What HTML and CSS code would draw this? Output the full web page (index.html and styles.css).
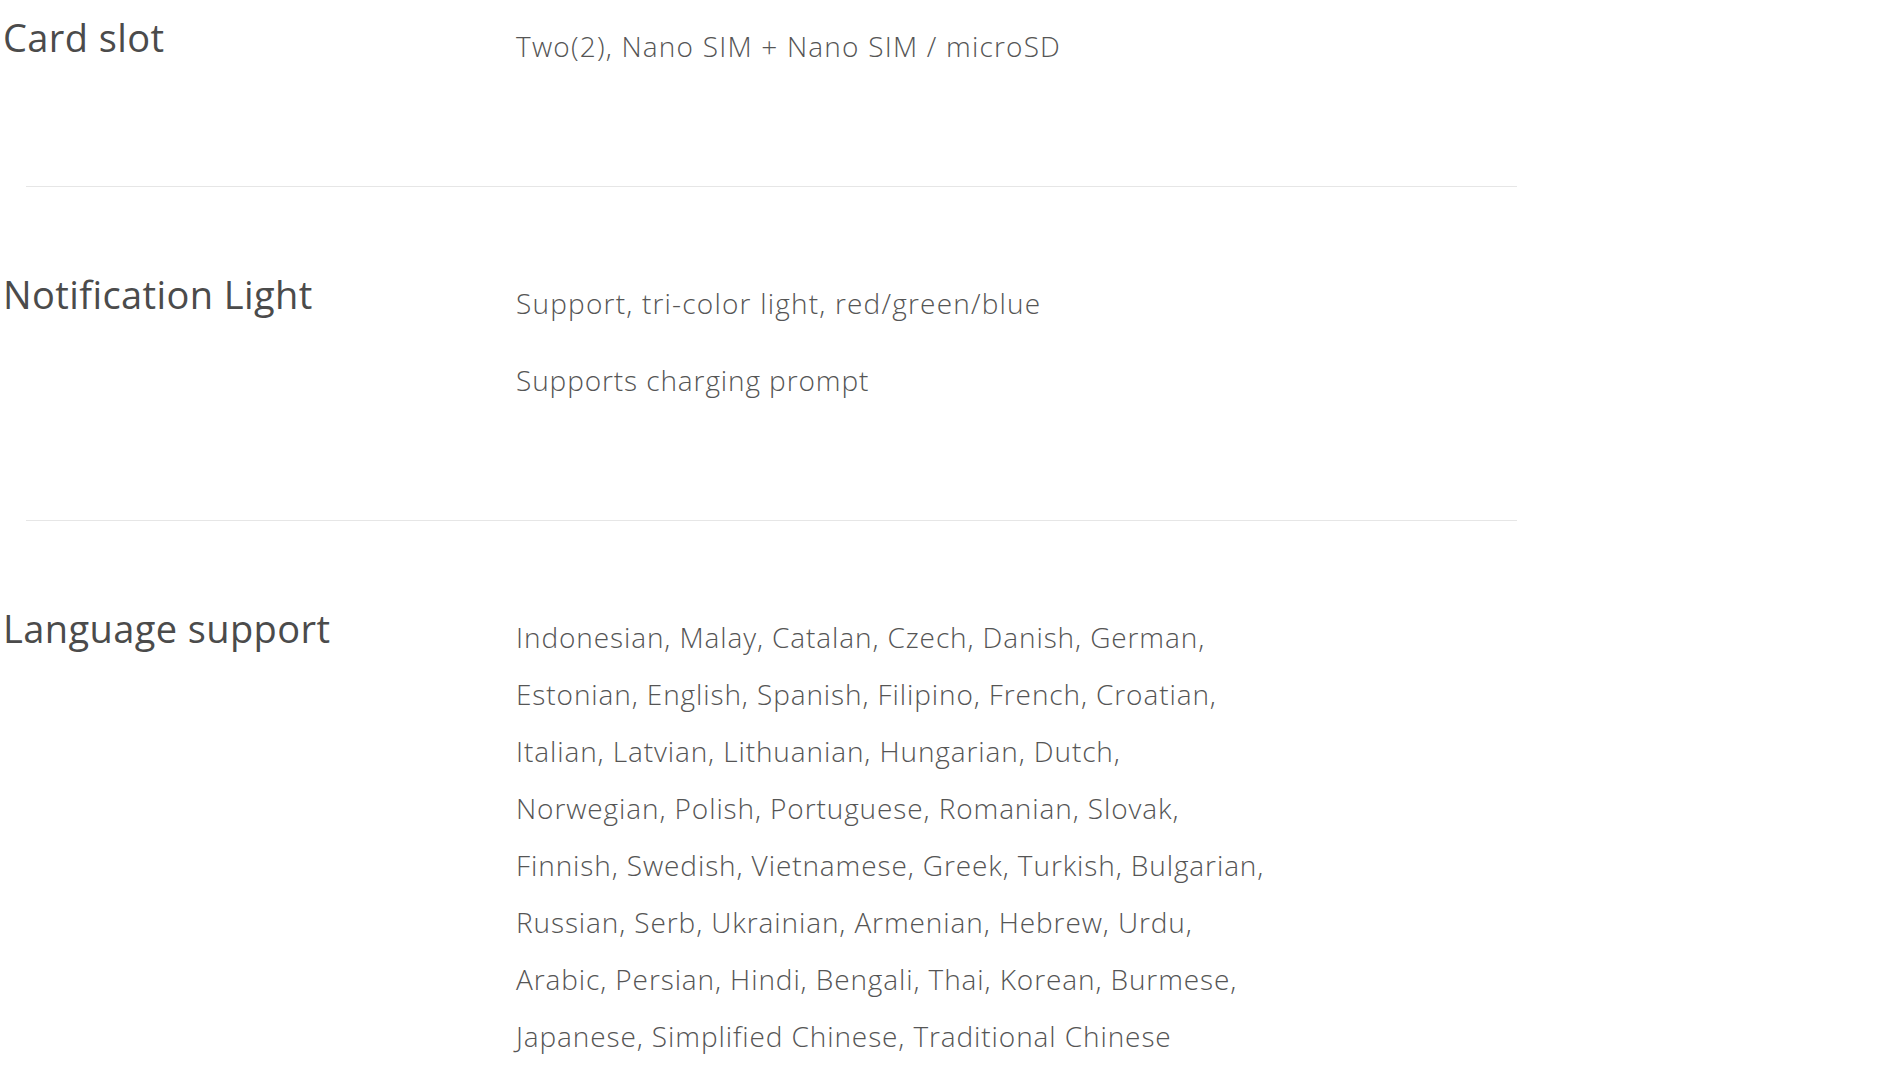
FILE: index.html
```html
<!DOCTYPE html>
<html lang="en">
  <head>
    <meta charset="UTF-8" />
    <meta name="viewport" content="width=device-width, initial-scale=1.0" />
    <title>Specifications</title>
    <link rel="stylesheet" href="styles.css">
  </head>
  <body>
    <div class="specs">
      <div class="spec">
        <h2 class="spec-name">Card slot</h2>
        <div class="spec-value">
          <p class="big">Two(2), Nano SIM + Nano SIM / microSD</p>
        </div>
      </div>
      <div class="line"></div>

      <div class="spec">
        <h2 class="spec-name">Notification Light</h2>
        <div class="spec-value">
          <p class="big">Support, tri-color light, red/green/blue</p>
          <p>Supports charging prompt</p>
        </div>
      </div>
      <div class="line"></div>

      <div class="spec">
        <h2 class="spec-name">Language support</h2>
        <div class="spec-value">
          <p>
            Indonesian, Malay, Catalan, Czech, Danish, German,<br>
            Estonian, English, Spanish, Filipino, French, Croatian,<br>
            Italian, Latvian, Lithuanian, Hungarian, Dutch,<br>
            Norwegian, Polish, Portuguese, Romanian, Slovak,<br>
            Finnish, Swedish, Vietnamese, Greek, Turkish, Bulgarian,<br>
            Russian, Serb, Ukrainian, Armenian, Hebrew, Urdu,<br>
            Arabic, Persian, Hindi, Bengali, Thai, Korean, Burmese,<br>
            Japanese, Simplified Chinese, Traditional Chinese
          </p>
        </div>
      </div>
    </div>
  </body>
</html>
```

FILE: styles.css
```css
* {
  margin: 0;
  padding: 0;
}
html,
body {
  background-color: #fff;
}
body {
  font-family: "Open Sans", "Noto Sans", sans-serif;
  overflow: hidden;
}
.specs {
  width: 1517px;
}
.spec {
  display: grid;
  grid-template-columns: 516px 1fr;
  padding: 88px 0 111px;
}
/* 第一行页面已滚动，顶部留白较少 */
.spec:first-child {
  padding-top: 18px;
}
.spec-name {
  padding-left: 3px;
  font-size: 38px;
  font-weight: 400;
  letter-spacing: 0.4px;
  line-height: 38px;
  color: #4b4b4b;
}
.spec-value p {
  font-size: 28px;
  font-weight: 300;
  letter-spacing: 0.9px;
  line-height: 57px;
  color: #555;
}
.spec-value p.big {
  letter-spacing: 1.2px;
}
.spec-value p + p {
  margin-top: 20px;
}
.line {
  height: 1px;
  margin-left: 26px;
  background-color: #e6e6e6;
}
```
